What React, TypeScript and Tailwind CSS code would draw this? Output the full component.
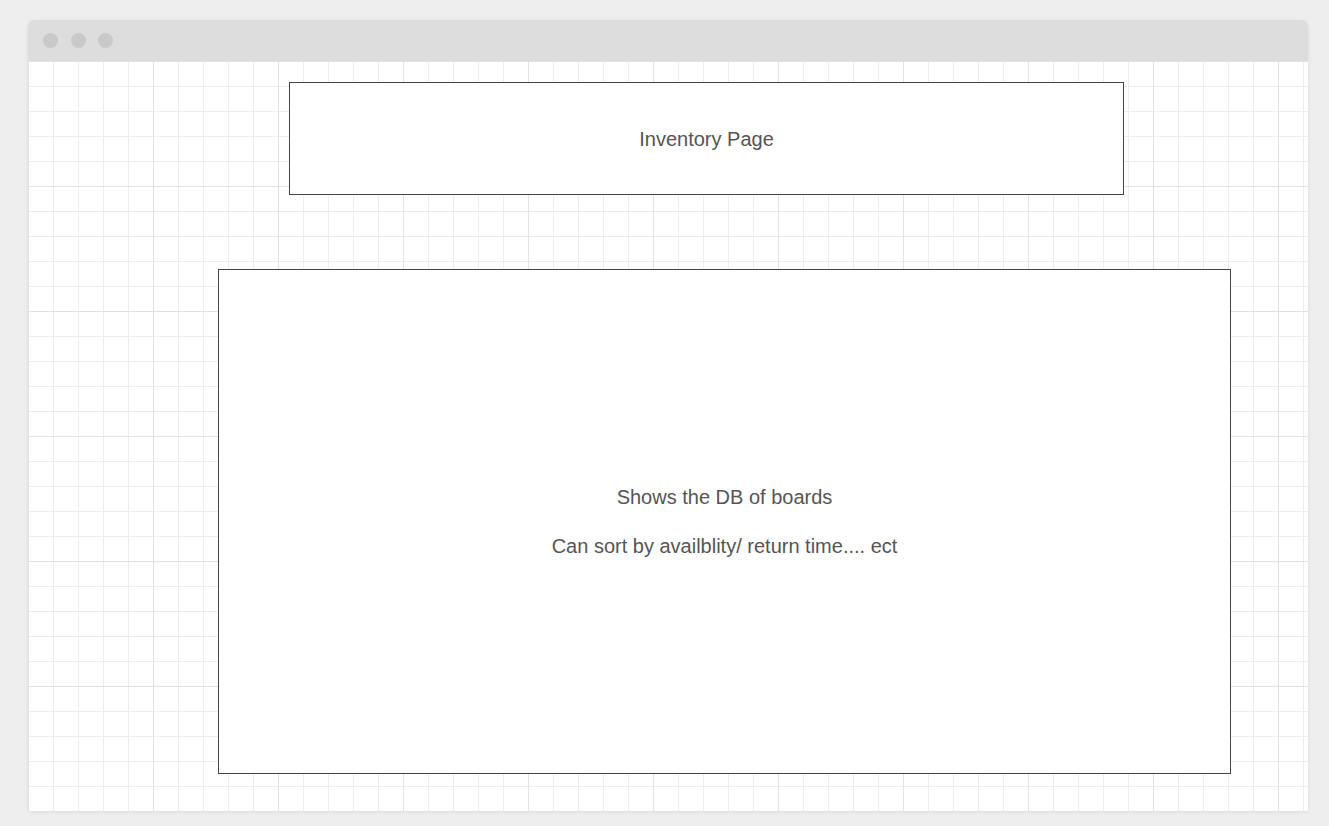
import React from 'react';

function TitleBar() {
  return (
    <div className="h-[41px] bg-[#dddddd] rounded-t-[6px] flex items-center gap-[12.5px] pl-[15px]">
      <span className="w-[15px] h-[15px] rounded-full bg-[#c9c9c9]" />
      <span className="w-[15px] h-[15px] rounded-full bg-[#c9c9c9]" />
      <span className="w-[15px] h-[15px] rounded-full bg-[#c9c9c9]" />
    </div>
  );
}

export default function App() {
  return (
    <div
      className="w-[1329px] h-[826px] bg-[#eeeeee] pt-[20px] pl-[28px]"
      style={{ fontFamily: '"Liberation Sans", Arial, sans-serif' }}
    >
      <div className="w-[1280px] h-[791px] flex flex-col rounded-t-[6px] shadow-[0_1px_4px_rgba(0,0,0,0.08)]">
        <TitleBar />
        <div className="flex-1 bg-white bg-[linear-gradient(to_right,#e2e2e2_1px,transparent_1px),linear-gradient(to_bottom,#e2e2e2_1px,transparent_1px),linear-gradient(to_right,#ededed_1px,transparent_1px),linear-gradient(to_bottom,#ededed_1px,transparent_1px)] bg-size-[125px_125px,125px_125px,25px_25px,25px_25px] pt-[21px] flex flex-col">
          <div className="ml-[261px] w-[835px] h-[113px] border border-[#444444] bg-white flex items-center justify-center text-[20px] text-[#555555]">
            Inventory Page
          </div>
          <div className="mt-[74px] ml-[190px] w-[1013px] h-[505px] border border-[#444444] bg-white flex flex-col items-center justify-center gap-[25px] text-[20px] leading-[24px] text-[#555555]">
            <p>Shows the DB of boards</p>
            <p>Can sort by availblity/ return time.... ect</p>
          </div>
        </div>
      </div>
    </div>
  );
}
